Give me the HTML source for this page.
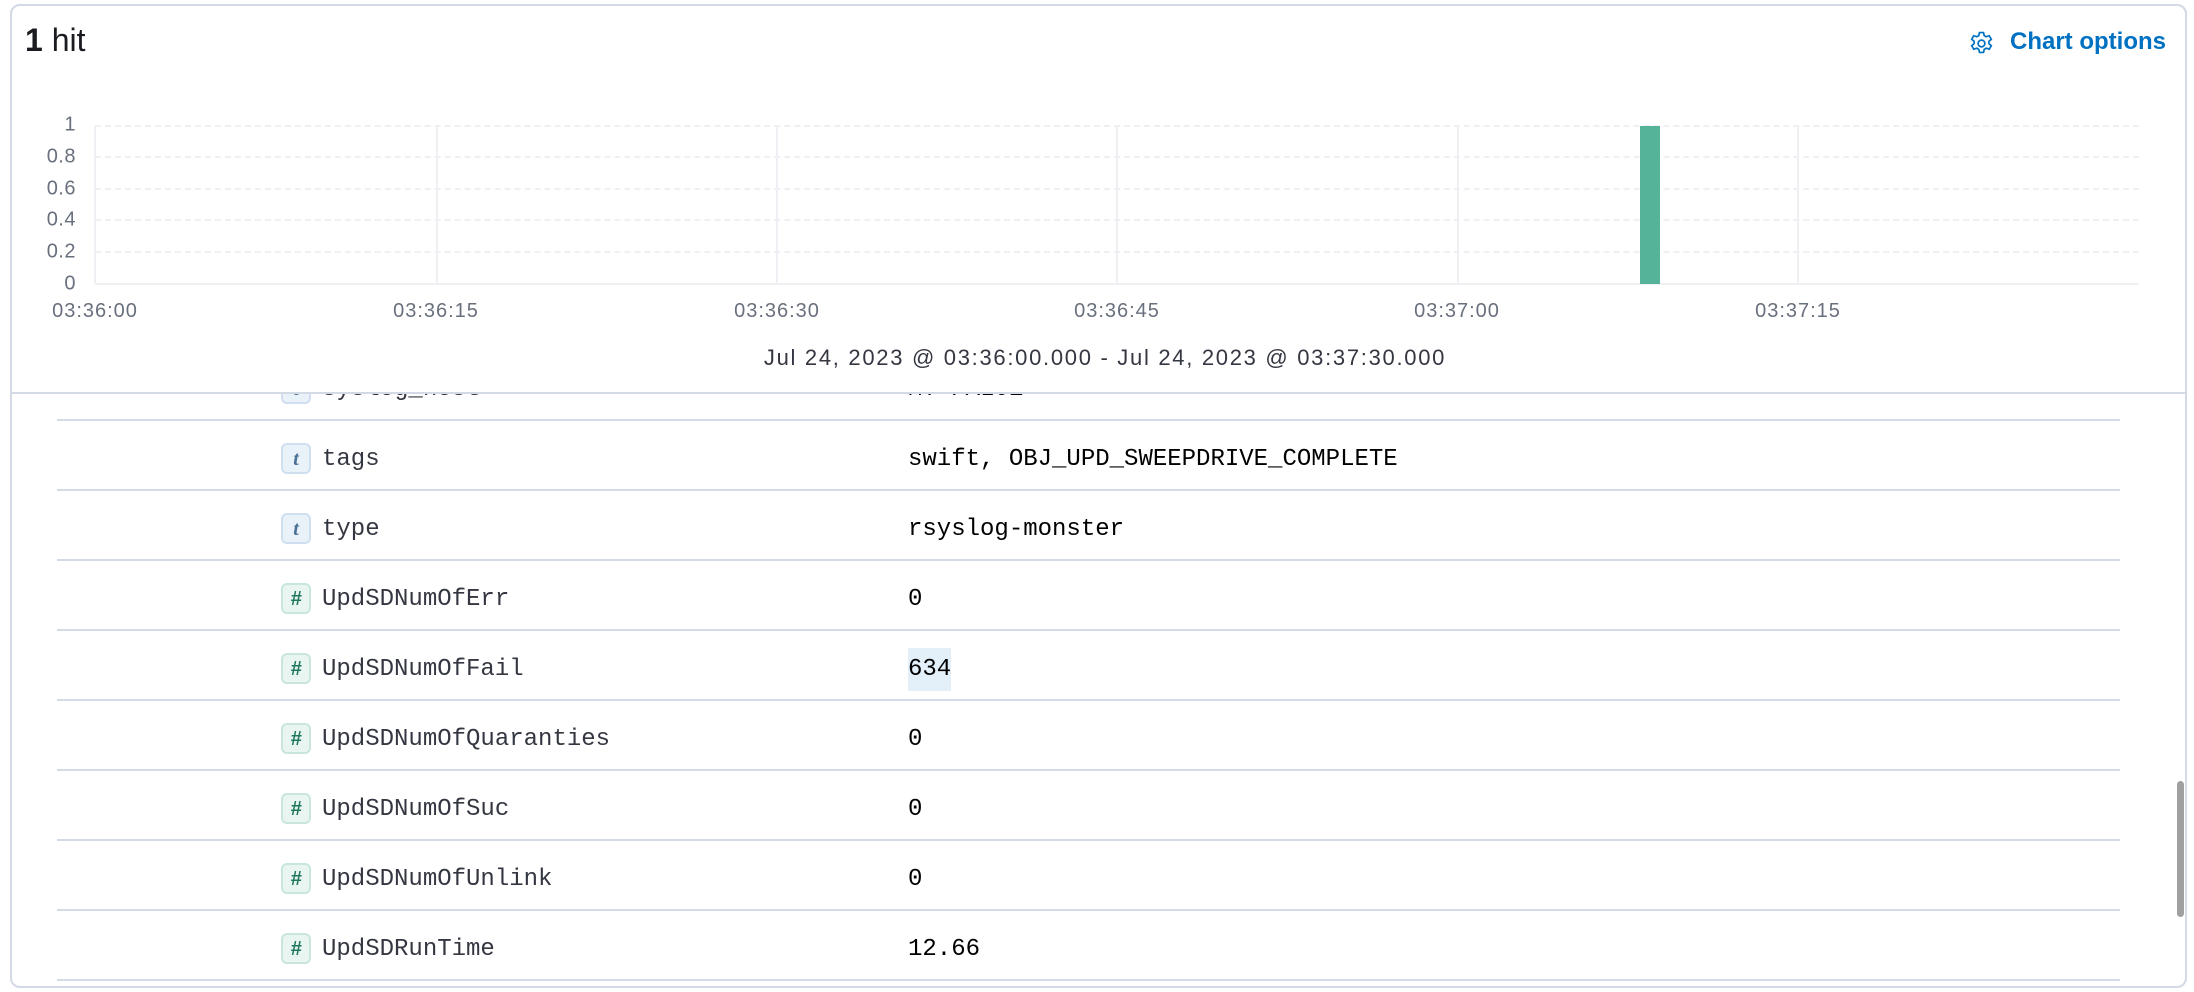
<!DOCTYPE html>
<html><head><meta charset="utf-8"><style>
*{margin:0;padding:0;box-sizing:border-box}
body{width:2194px;height:992px;background:#fff;position:relative;overflow:hidden;font-family:"Liberation Sans",sans-serif}
.outer{position:absolute;left:10px;top:4px;width:2177px;height:984px;border:2px solid #d3dae6;border-radius:10px}
.panel{position:absolute;left:10px;top:4px;width:2177px;height:390px;border:2px solid #d3dae6;border-radius:10px 10px 0 0;background:#fff;z-index:5}
.abs{position:absolute}
.yl{position:absolute;right:2118px;font-size:20px;color:#69707d;transform:translateY(-50%);letter-spacing:0.5px}
.xl{position:absolute;top:300px;font-size:20px;color:#69707d;transform:translateX(-50%);letter-spacing:1px}
.hl{position:absolute;left:95px;width:2044px;border-top:2px dashed #eef0f3}
.vl{position:absolute;top:126px;height:158px;border-left:2px solid #eef0f3}
.row{position:absolute;left:57px;width:2063px;height:70px;border-bottom:2px solid #d3dae6}
.badge{position:absolute;left:224px;top:22px;width:30px;height:31px;border-radius:6px;text-align:center;line-height:29px;font-size:20px}
.bt{background:#e9f1f9;border:2px solid #cfdff0;color:#4a7194;font-family:"Liberation Serif",serif;font-style:italic;font-weight:bold}
.bn{background:#e8f5f1;border:2px solid #c9e6dc;color:#20795f;font-weight:bold;font-style:italic;font-family:"Liberation Sans",sans-serif}
.fn{position:absolute;left:265px;top:4px;line-height:70px;font-family:"Liberation Mono",monospace;font-size:24px;color:#343741}
.fv{position:absolute;left:851px;top:4px;line-height:70px;font-family:"Liberation Mono",monospace;font-size:24px;color:#000}
</style></head><body>
<div class="outer"></div>
<div class="row" style="top:351px"><div class="badge bt">t</div><div class="fn">syslog_host</div><div class="fv">MT-PAL01</div></div>
<div class="row" style="top:421px"><div class="badge bt">t</div><div class="fn">tags</div><div class="fv">swift, OBJ_UPD_SWEEPDRIVE_COMPLETE</div></div>
<div class="row" style="top:491px"><div class="badge bt">t</div><div class="fn">type</div><div class="fv">rsyslog-monster</div></div>
<div class="row" style="top:561px"><div class="badge bn">#</div><div class="fn">UpdSDNumOfErr</div><div class="fv">0</div></div>
<div class="row" style="top:631px"><div class="badge bn">#</div><div class="fn">UpdSDNumOfFail</div><div class="fv"><span style="background:#e3eff9;padding:8px 0">634</span></div></div>
<div class="row" style="top:701px"><div class="badge bn">#</div><div class="fn">UpdSDNumOfQuaranties</div><div class="fv">0</div></div>
<div class="row" style="top:771px"><div class="badge bn">#</div><div class="fn">UpdSDNumOfSuc</div><div class="fv">0</div></div>
<div class="row" style="top:841px"><div class="badge bn">#</div><div class="fn">UpdSDNumOfUnlink</div><div class="fv">0</div></div>
<div class="row" style="top:911px"><div class="badge bn">#</div><div class="fn">UpdSDRunTime</div><div class="fv">12.66</div></div>
<div class="abs" style="left:2177px;top:781px;width:7px;height:136px;background:#a0a0a0;border-radius:4px"></div>

<div class="panel"></div>
<div style="position:absolute;left:0;top:0;width:2194px;height:394px;z-index:6">
<div class="abs" style="left:25px;top:22px;font-size:32px;color:#1a1c21"><b>1</b> hit</div>
<div class="abs" style="left:1968px;top:30px"><svg width="27" height="27" viewBox="0 0 16 16"><path fill="none" stroke="#0071c2" stroke-width="1" d="M6.8 1.5h2.4l.4 1.8 1.2.7 1.8-.6 1.2 2.1-1.4 1.2v1.4l1.4 1.2-1.2 2.1-1.8-.6-1.2.7-.4 1.8H6.8l-.4-1.8-1.2-.7-1.8.6-1.2-2.1 1.4-1.2V6.7L2.2 5.5l1.2-2.1 1.8.6 1.2-.7z"/><circle cx="8" cy="8" r="2" fill="none" stroke="#0071c2"/></svg></div>
<div class="abs" style="left:2010px;top:28px;font-size:24px;font-weight:bold;color:#0071c2">Chart options</div>
<div class="yl" style="top:125px">1</div>
<div class="yl" style="top:157px">0.8</div>
<div class="yl" style="top:189px">0.6</div>
<div class="yl" style="top:220px">0.4</div>
<div class="yl" style="top:252px">0.2</div>
<div class="yl" style="top:284px">0</div>
<div class="hl" style="top:125px"></div>
<div class="hl" style="top:156px"></div>
<div class="hl" style="top:188px"></div>
<div class="hl" style="top:219px"></div>
<div class="hl" style="top:251px"></div>
<div class="vl" style="left:94px"></div>
<div class="vl" style="left:436px"></div>
<div class="vl" style="left:776px"></div>
<div class="vl" style="left:1116px"></div>
<div class="vl" style="left:1457px"></div>
<div class="vl" style="left:1797px"></div>
<div class="abs" style="left:95px;top:283px;width:2044px;height:2px;background:#eef0f3"></div>
<div class="abs" style="left:1640px;top:126px;width:20px;height:158px;background:#54b399"></div>
<div class="xl" style="left:95px">03:36:00</div>
<div class="xl" style="left:436px">03:36:15</div>
<div class="xl" style="left:777px">03:36:30</div>
<div class="xl" style="left:1117px">03:36:45</div>
<div class="xl" style="left:1457px">03:37:00</div>
<div class="xl" style="left:1798px">03:37:15</div>
<div class="abs" style="left:0;width:2210px;top:345px;text-align:center;font-size:22px;color:#343741;letter-spacing:1.7px">Jul 24, 2023 @ 03:36:00.000 - Jul 24, 2023 @ 03:37:30.000</div>
</div>
</body></html>
